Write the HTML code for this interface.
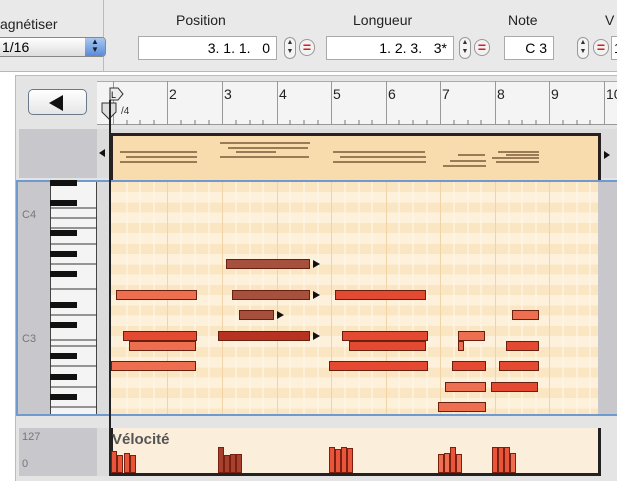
<!DOCTYPE html>
<html><head><meta charset="utf-8"><style>
*{margin:0;padding:0;box-sizing:border-box}
body{width:617px;height:481px;background:#fff;position:relative;overflow:hidden;font-family:"Liberation Sans",sans-serif}
.a{position:absolute}
.lbl{font-size:14px;color:#222}
.fld{background:#fff;border:1px solid #aaa;font-size:14px;text-align:right;padding-right:6px;line-height:22px;height:24px;top:36px}
.st{top:37px;width:12px;height:22px;border:1px solid #999;border-radius:6px;background:#f4f4f4;font-size:7px;text-align:center;line-height:9px;color:#333}
.eq{top:39px;width:16px;height:17px;border:1px solid #999;border-radius:8px;background:#f2f2f2;color:#d02020;font-weight:bold;font-size:14px;text-align:center;line-height:15px}
.n{position:absolute;height:10px;border:1px solid #6a2010}
.o{background:#ee6e50}.r{background:#e44a32}.b{background:#a8503e}.d{background:#b83222}
.ar{position:absolute;width:0;height:0;border-top:4px solid transparent;border-bottom:4px solid transparent;border-left:7px solid #111}
.v{position:absolute;bottom:0;border:1px solid #7a2010;background:#e8553a;width:6px}
</style></head><body>
<div class="a" style="left:0;top:0;width:617px;height:72px;background:#e9e9e9;border-bottom:1px solid #b8b8b8"></div>
<div class="a" style="left:103px;top:0;width:1px;height:72px;background:#bbb"></div>
<div class="a lbl" style="left:0;top:16px">agnétiser</div>
<div class="a" style="left:-4px;top:37px;width:110px;height:20px;border:1px solid #888;border-radius:4px;background:linear-gradient(#fff,#ddd);font-size:14px;line-height:18px;padding-left:5px">1/16</div>
<div class="a" style="left:85px;top:38px;width:20px;height:18px;background:linear-gradient(#a8c8f0,#5a8ad8);border-radius:0 3px 3px 0;color:#123;font-size:8px;text-align:center;line-height:8px">▲<br>▼</div>
<div class="a lbl" style="left:176px;top:12px">Position</div>
<div class="a lbl" style="left:353px;top:12px">Longueur</div>
<div class="a lbl" style="left:508px;top:12px">Note</div>
<div class="a lbl" style="left:605px;top:12px">V</div>
<div class="a fld" style="left:138px;width:139px">3. 1. 1. &nbsp;&nbsp;0</div>
<div class="a st" style="left:284px">▲<br>▼</div><div class="a eq" style="left:299px">=</div>
<div class="a fld" style="left:326px;width:128px">1. 2. 3. &nbsp;&nbsp;3*</div>
<div class="a st" style="left:459px">▲<br>▼</div><div class="a eq" style="left:474px">=</div>
<div class="a fld" style="left:504px;width:50px">C 3</div>
<div class="a st" style="left:577px">▲<br>▼</div><div class="a eq" style="left:593px">=</div>
<div class="a fld" style="left:611px;width:20px;text-align:left;padding-left:2px">1</div>

<div class="a" style="left:15px;top:75px;width:602px;height:406px;background:#e4e4e4;border-left:1px solid #bbb;border-top:1px solid #bbb"></div>
<div class="a" style="left:28px;top:89px;width:59px;height:26px;border:1px solid #6a7a8a;border-radius:5px;background:linear-gradient(#fff,#e6e6e6)"></div>
<div class="a" style="left:49px;top:95px;border-top:8px solid transparent;border-bottom:8px solid transparent;border-right:14px solid #111"></div>
<div class="a" style="left:97px;top:81px;width:520px;height:44px;background:#f4f4f4;border-top:1px solid #aaa;border-bottom:1px solid #999"></div>
<svg class="a" style="left:0;top:0" width="617" height="481">
<g stroke="#999" stroke-width="1">
<line x1="113.5" y1="81" x2="113.5" y2="125"/><line x1="167.5" y1="81" x2="167.5" y2="125"/><line x1="222.5" y1="81" x2="222.5" y2="125"/><line x1="277.5" y1="81" x2="277.5" y2="125"/><line x1="331.5" y1="81" x2="331.5" y2="125"/><line x1="386.5" y1="81" x2="386.5" y2="125"/><line x1="440.5" y1="81" x2="440.5" y2="125"/><line x1="495.5" y1="81" x2="495.5" y2="125"/><line x1="549.5" y1="81" x2="549.5" y2="125"/><line x1="604.5" y1="81" x2="604.5" y2="125"/>
</g>
<g stroke="#777">
<path d="M127 120v5M140 120v5M154 120v5M181 120v5M195 120v5M209 120v5M236 120v5M250 120v5M263 120v5M290 120v5M304 120v5M318 120v5M345 120v5M359 120v5M372 120v5M399 120v5M413 120v5M427 120v5M454 120v5M468 120v5M481 120v5M509 120v5M522 120v5M536 120v5M563 120v5M577 120v5M590 120v5"/>
</g>
<g font-size="14" fill="#222" font-family="Liberation Sans"><text x="169" y="99">2</text><text x="224" y="99">3</text><text x="279" y="99">4</text><text x="333" y="99">5</text><text x="388" y="99">6</text><text x="442" y="99">7</text><text x="497" y="99">8</text><text x="551" y="99">9</text><text x="606" y="99">10</text></g>
<path d="M110 88h8l5 6-5 6h-8z" fill="#eee" stroke="#333"/><text x="111" y="98" font-size="9">L</text>
<path d="M102 103h14v9l-7 7-7-7z" fill="#ddd" stroke="#333"/><text x="121" y="114" font-size="10" fill="#333">/4</text>
</svg>
<!-- overview -->
<div class="a" style="left:19px;top:129px;width:78px;height:49px;background:#c8c8cc"></div>
<div class="a" style="left:97px;top:129px;width:520px;height:49px;background:#dcdcdc"></div>
<div class="a" style="left:110px;top:133px;width:491px;height:47px;background:#f8dcae;border:3px solid #2a2020;border-bottom:none"></div>
<div class="a" style="left:99px;top:149px;border-top:4px solid transparent;border-bottom:4px solid transparent;border-right:6px solid #111"></div>
<div class="a" style="left:604px;top:151px;border-top:4px solid transparent;border-bottom:4px solid transparent;border-left:6px solid #111"></div>
<svg class="a" style="left:0;top:0" width="617" height="481"><g stroke="#7a5a3a" stroke-width="1.5">
<path d="M120 152h77M126 157h71M120 162h77M220 143h90M228 148h80M236 152h40M220 157h89M333 152h92M340 157h86M333 162h93M458 155h27M450 161h36M443 166h43M498 152h41M492 158h47M496 162h43M506 155h33"/></g></svg>
<!-- piano roll -->
<div class="a" style="left:16px;top:180px;width:601px;height:236px;border:2px solid #6e9ad0;border-right:none;background:#c8c8cc"></div>
<div class="a" style="left:50px;top:182px;width:47px;height:232px;background:#f4f4f4;border-left:1px solid #444;border-right:1px solid #444"></div>
<div class="a" style="left:97px;top:182px;width:13px;height:232px;background:#dcdcdc"></div>
<div class="a" style="left:110px;top:182px;width:488px;height:232px;background:repeating-linear-gradient(#fbe6c4 0 10px,#fdf1dc 10px 20.6px)"></div>
<svg class="a" style="left:0;top:0" width="617" height="481">
<g stroke="#fff8ec" stroke-width="1"><path d="M127 182v232M140 182v232M154 182v232M181 182v232M195 182v232M209 182v232M236 182v232M250 182v232M263 182v232M290 182v232M304 182v232M318 182v232M345 182v232M359 182v232M372 182v232M399 182v232M413 182v232M427 182v232M454 182v232M468 182v232M481 182v232M509 182v232M522 182v232M536 182v232M563 182v232M577 182v232M590 182v232"/></g>
<g stroke="#f0d4a8"><path d="M167.5 182v232M222.5 182v232M277.5 182v232M331.5 182v232M386.5 182v232M440.5 182v232M495.5 182v232M549.5 182v232"/></g>
<g stroke="#333"><path d="M50 208h47M50 218h47M50 228h47M50 244h47M50 264h47M50 289h47M50 315h47M50 340h47M50 346h47M50 366h47M50 387h47M50 407h47"/></g>
<g fill="#111"><rect x="50" y="180" width="27" height="6"/><rect x="50" y="200" width="27" height="6"/><rect x="50" y="230" width="27" height="6"/><rect x="50" y="251" width="27" height="6"/><rect x="50" y="271" width="27" height="6"/><rect x="50" y="302" width="27" height="6"/><rect x="50" y="322" width="27" height="6"/><rect x="50" y="353" width="27" height="6"/><rect x="50" y="374" width="27" height="6"/><rect x="50" y="394" width="27" height="6"/></g>
<g font-size="11" fill="#777"><text x="22" y="218">C4</text><text x="22" y="342">C3</text></g>
</svg>
<div class="n b" style="left:226px;top:259px;width:84px"></div><div class="ar" style="left:313px;top:260px"></div>
<div class="n o" style="left:116px;top:290px;width:81px"></div>
<div class="n b" style="left:232px;top:290px;width:78px"></div><div class="ar" style="left:313px;top:291px"></div>
<div class="n r" style="left:335px;top:290px;width:91px"></div>
<div class="n b" style="left:239px;top:310px;width:35px"></div><div class="ar" style="left:277px;top:311px"></div>
<div class="n o" style="left:512px;top:310px;width:27px"></div>
<div class="n r" style="left:123px;top:331px;width:74px"></div>
<div class="n d" style="left:218px;top:331px;width:92px"></div><div class="ar" style="left:313px;top:332px"></div>
<div class="n r" style="left:342px;top:331px;width:86px"></div>
<div class="n o" style="left:458px;top:331px;width:27px"></div>
<div class="n o" style="left:129px;top:341px;width:67px"></div>
<div class="n r" style="left:349px;top:341px;width:77px"></div>
<div class="n o" style="left:458px;top:341px;width:6px"></div>
<div class="n r" style="left:506px;top:341px;width:33px"></div>
<div class="n o" style="left:111px;top:361px;width:85px"></div>
<div class="n r" style="left:329px;top:361px;width:99px"></div>
<div class="n r" style="left:452px;top:361px;width:34px"></div>
<div class="n r" style="left:499px;top:361px;width:40px"></div>
<div class="n o" style="left:445px;top:382px;width:41px"></div>
<div class="n r" style="left:491px;top:382px;width:47px"></div>
<div class="n o" style="left:438px;top:402px;width:48px"></div>
<!-- velocity -->
<div class="a" style="left:19px;top:428px;width:78px;height:48px;background:#c8c8cc;font-size:11px;color:#777"><span class="a" style="left:3px;top:3px">127</span><span class="a" style="left:3px;top:30px">0</span></div>
<div class="a" style="left:97px;top:428px;width:13px;height:48px;background:#dcdcdc"></div>
<div class="a" style="left:110px;top:428px;width:491px;height:48px;background:#fbeedb;border-left:3px solid #222;border-right:3px solid #222;border-bottom:3px solid #222"></div>
<div class="a" style="left:112px;top:431px;font-size:15px;font-weight:bold;color:#555">Vélocité</div>
<div class="a" style="left:110px;top:440px;width:491px;height:33px">
<div class="v" style="left:1px;height:22px"></div><div class="v" style="left:7px;height:18px"></div><div class="v" style="left:14px;height:20px"></div><div class="v" style="left:20px;height:18px"></div>
<div class="v" style="left:108px;height:26px;background:#a84030"></div><div class="v" style="left:114px;height:18px;background:#a84030"></div><div class="v" style="left:120px;height:19px;background:#a84030"></div><div class="v" style="left:126px;height:19px;background:#a84030"></div>
<div class="v" style="left:219px;height:26px"></div><div class="v" style="left:225px;height:24px"></div><div class="v" style="left:231px;height:26px"></div><div class="v" style="left:237px;height:25px"></div>
<div class="v" style="left:328px;height:19px;background:#ee6e50"></div><div class="v" style="left:334px;height:20px;background:#ee6e50"></div><div class="v" style="left:340px;height:26px"></div><div class="v" style="left:346px;height:19px;background:#ee6e50"></div>
<div class="v" style="left:382px;height:26px"></div><div class="v" style="left:388px;height:26px"></div><div class="v" style="left:394px;height:26px"></div><div class="v" style="left:400px;height:20px;background:#ee6e50"></div>
</div>
<div class="a" style="left:109px;top:100px;width:2px;height:376px;background:#222"></div>
</body></html>
